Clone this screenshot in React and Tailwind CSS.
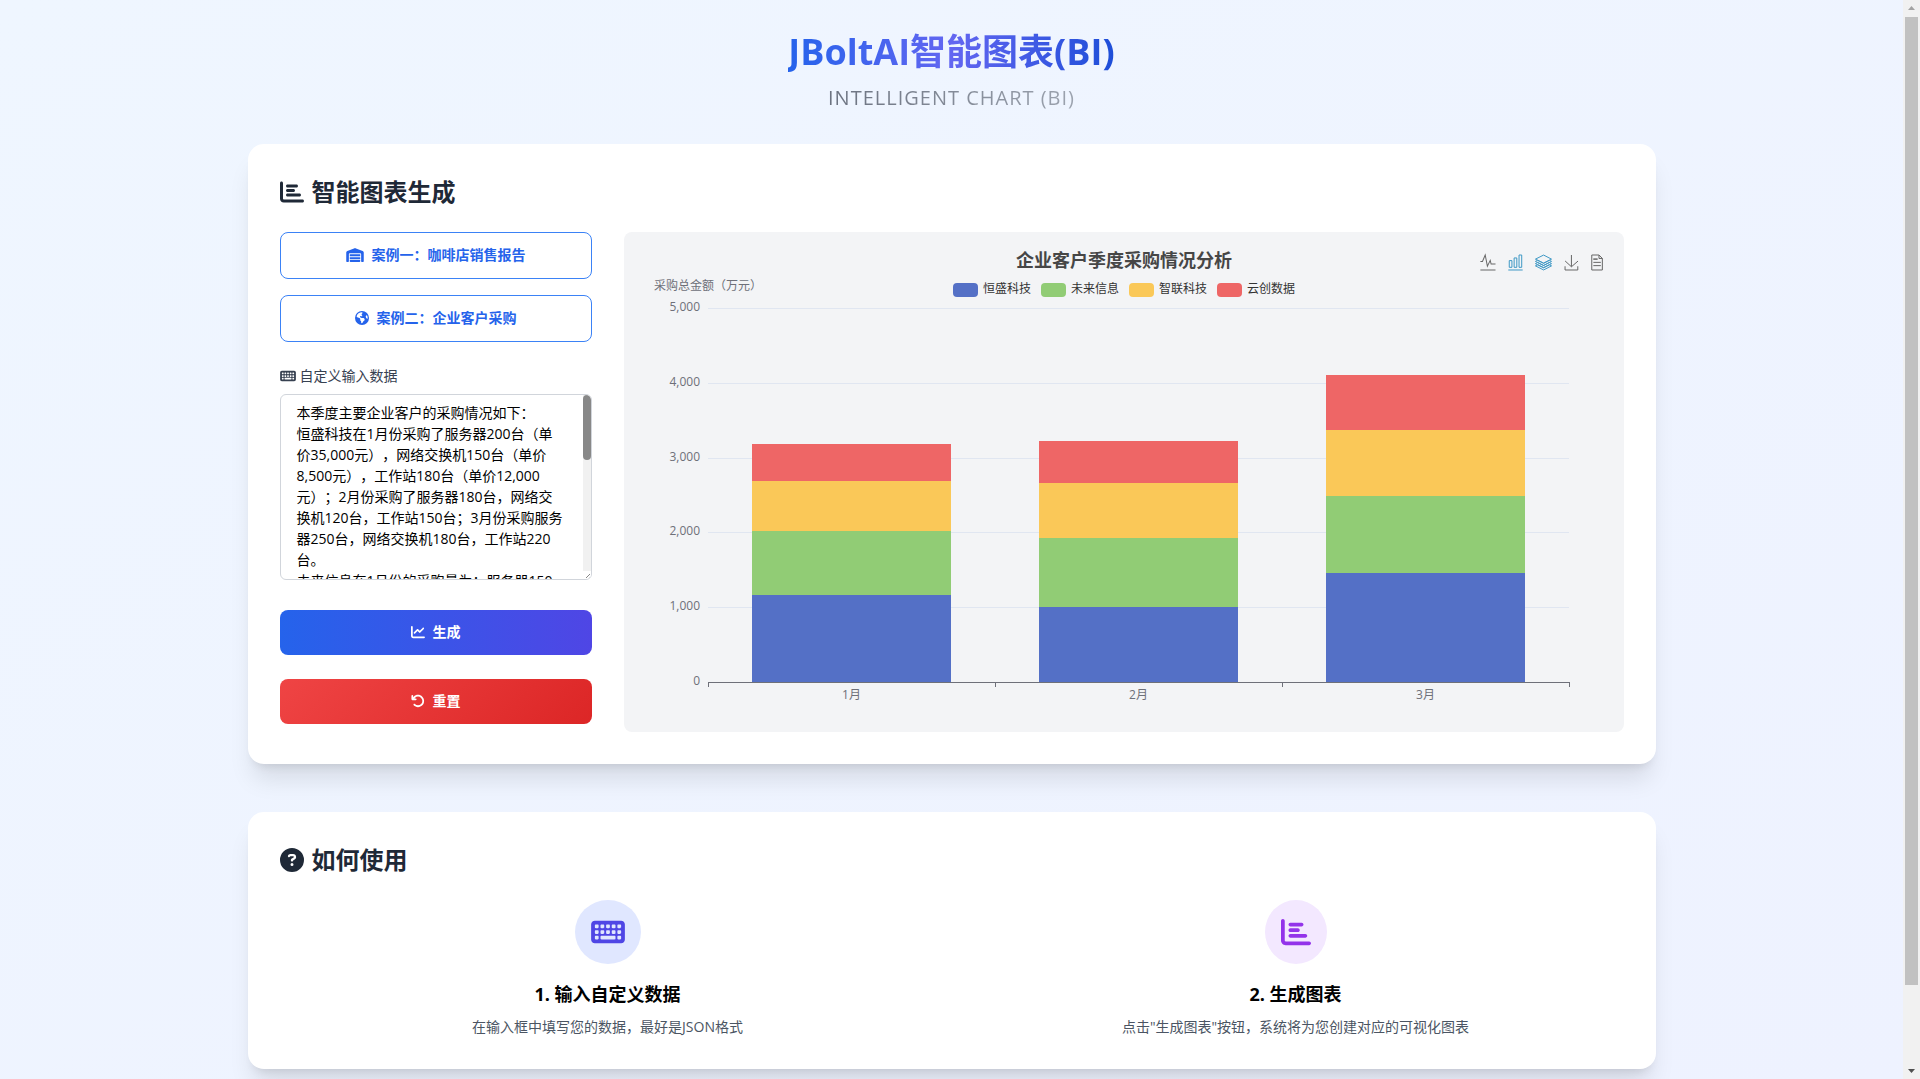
import React, { useState } from 'react';
import {
  FaArrowRotateLeft,
  FaChartBar,
  FaChartLine,
  FaCircleQuestion,
  FaEarthAmericas,
  FaKeyboard,
  FaWarehouse
} from 'react-icons/fa6';

const SAMPLE_TEXT = `本季度主要企业客户的采购情况如下：
恒盛科技在1月份采购了服务器200台（单价35,000元），网络交换机150台（单价8,500元），工作站180台（单价12,000元）；2月份采购了服务器180台，网络交换机120台，工作站150台；3月份采购服务器250台，网络交换机180台，工作站220台。
未来信息在1月份的采购量为：服务器150`;

const months = ['1月', '2月', '3月'];

const series = [
  { name: '恒盛科技', color: '#5470c6', data: [1168, 1003, 1463] },
  { name: '未来信息', color: '#91cc75', data: [850, 925, 1018] },
  { name: '智联科技', color: '#fac858', data: [668, 735, 891] },
  { name: '云创数据', color: '#ee6666', data: [500, 561, 738] }
];

const ticks = [0, 1000, 2000, 3000, 4000, 5000];

const tools = [
  {
    label: '切换为折线图',
    active: false,
    viewBox: '4 7 52 51',
    size: 'h-[15px] w-4',
    path: 'M4.1,28.9h7.1l9.3-22l7.4,38l9.7-19.7l3,12.8h14.9M4.1,58h51.4'
  },
  {
    label: '切换为柱状图',
    active: true,
    viewBox: '3 2 54 56',
    size: 'h-[15px] w-[15px]',
    path: 'M6.7,22.9h10V48h-10V22.9zM24.9,13h10v35h-10V13zM43.2,2h10v46h-10V2zM3.1,58h53.7'
  },
  {
    label: '切换为堆叠',
    active: true,
    viewBox: '0 2 60 56',
    size: 'h-[15px] w-[17px]',
    path: 'M8.2,38.4l-8.4,4.1l30.6,15.3L60,42.5l-8.1-4.1l-21.5,11L8.2,38.4z M51.9,30l-8.1,4.2l-13.4,6.9l-13.9-6.9L8.2,30l-8.4,4.2l8.4,4.2l22.2,11l21.5-11l8.1-4.2L51.9,30z M51.9,21.7l-8.1,4.2L35.7,30l-5.3,2.8L24.9,30l-8.4-4.1l-8.3-4.2l-8.4,4.2L8.2,30l8.3,4.2l13.9,6.9l13.4-6.9l8.1-4.2l8.1-4.1L51.9,21.7z M30.4,2.2L-0.2,17.5l8.4,4.1l8.3,4.2l8.4,4.2l5.5,2.7l5.3-2.7l8.1-4.2l8.1-4.2l8.1-4.1L30.4,2.2z'
  },
  {
    label: '保存为图片',
    active: false,
    viewBox: '4 0 51 58',
    size: 'h-[15px] w-[15px]',
    path: 'M4.7,22.9L29.3,45.5L54.7,23.4M4.6,43.6L4.6,58L53.8,58L53.8,43.6M29.2,45.1L29.2,0'
  },
  {
    label: '数据视图',
    active: false,
    viewBox: '11 2 40 56',
    size: 'h-[15px] w-3',
    path: 'M17.5,17.3H33 M17.5,17.3H33 M45.4,29.5h-28 M11.5,2v56H51V14.8L38.4,2H11.5z M38.4,2.2v12.7H51 M45.4,41.7h-28'
  }
];

// plot area inside the 1000x500 chart
const LEFT = 84;
const RIGHT = 945;
const TOP = 76;
const BOTTOM = 450;
const BAND = (RIGHT - LEFT) / months.length;
const BAR = 199;

const yOf = (value) => BOTTOM - (value / 5000) * (BOTTOM - TOP);

const StackedBarChart = () => {
  const bars = months.flatMap((month, i) => {
    let sum = 0;
    return series.map((s) => {
      const y0 = Math.round(yOf(sum));
      sum += s.data[i];
      const y1 = Math.round(yOf(sum));
      return {
        key: month + s.name,
        x: LEFT + i * BAND + 44,
        y: y1,
        height: y0 - y1,
        color: s.color
      };
    });
  });

  return (
    <svg viewBox="0 0 1000 500" className="block w-full" role="img" aria-label="企业客户季度采购情况分析">
      <text x="500" y="35" textAnchor="middle" className="fill-[#464646] text-lg font-bold">
        企业客户季度采购情况分析
      </text>

      {series.map((s, i) => (
        <g key={s.name}>
          <rect x={329 + i * 88} y="51" width="25" height="14" rx="4" fill={s.color} />
          <text x={359 + i * 88} y="61" className="fill-[#333333] text-xs">
            {s.name}
          </text>
        </g>
      ))}

      <text x="84" y="58" textAnchor="middle" className="fill-[#6e7079] text-xs">
        采购总金额（万元）
      </text>

      {ticks.map((tick) => (
        <g key={tick}>
          {tick > 0 && (
            <path d={`M${LEFT} ${Math.round(yOf(tick)) + 0.5}H${RIGHT}`} stroke="#e0e6f1" />
          )}
          <text x="76" y={Math.round(yOf(tick)) + 3} textAnchor="end" className="fill-[#6e7079] text-xs">
            {tick.toLocaleString('en-US')}
          </text>
        </g>
      ))}

      {bars.map((b) => (
        <rect key={b.key} x={b.x} y={b.y} width={BAR} height={b.height} fill={b.color} />
      ))}

      <path d={`M${LEFT} ${BOTTOM + 0.5}H${RIGHT + 1}`} stroke="#6e7079" />
      {[0, 1, 2, 3].map((i) => (
        <path key={i} d={`M${LEFT + i * BAND + 0.5} ${BOTTOM}v5`} stroke="#6e7079" />
      ))}
      {months.map((month, i) => (
        <text
          key={month}
          x={LEFT + (i + 0.5) * BAND}
          y="467"
          textAnchor="middle"
          className="fill-[#6e7079] text-xs"
        >
          {month}
        </text>
      ))}
    </svg>
  );
};

const ChartPanel = () => (
  <div className="relative rounded-lg bg-[#f3f4f6] lg:col-span-3">
    <StackedBarChart />
    <div className="absolute top-[23px] right-[21px] flex gap-3">
      {tools.map((tool) => (
        <button
          key={tool.label}
          type="button"
          aria-label={tool.label}
          className={tool.active ? 'text-[#3e98c5]' : 'text-[#666666]'}
        >
          <svg
            viewBox={tool.viewBox}
            className={`block overflow-visible ${tool.size}`}
            fill="none"
            stroke="currentColor"
          >
            <path d={tool.path} vectorEffect="non-scaling-stroke" />
          </svg>
        </button>
      ))}
    </div>
  </div>
);

const Card = ({ icon, title, children }) => (
  <section className="rounded-2xl bg-white p-8 shadow-[0_20px_25px_-5px_rgba(0,0,0,0.1),0_8px_10px_-6px_rgba(0,0,0,0.1)]">
    <h2 className="mb-6 flex items-center gap-2 text-2xl font-bold text-[#1f2937]">
      {icon}
      {title}
    </h2>
    {children}
  </section>
);

const CaseButton = ({ icon, children }) => (
  <button
    type="button"
    className="flex w-full items-center justify-center gap-2 rounded-lg border border-[#3b82f6] bg-white pt-[11px] pb-[13px] text-sm/[21px] font-bold text-[#2563eb]"
  >
    {icon}
    {children}
  </button>
);

const DataForm = () => {
  const [text, setText] = useState(SAMPLE_TEXT);

  return (
    <div className="flex flex-col">
      <div className="flex flex-col gap-4">
        <CaseButton icon={<FaWarehouse className="h-[14px] w-[18px]" />}>案例一：咖啡店销售报告</CaseButton>
        <CaseButton icon={<FaEarthAmericas className="size-[14px]" />}>案例二：企业客户采购</CaseButton>
      </div>

      <label htmlFor="custom-data" className="mt-6 mb-2 flex items-center gap-1 text-sm/5 text-[#374151]">
        <FaKeyboard className="h-[14px] w-4" />
        自定义输入数据
      </label>
      <div className="flex h-[186px] overflow-hidden rounded-md border border-[#d1d5db]">
        <textarea
          id="custom-data"
          value={text}
          onChange={(e) => setText(e.target.value)}
          className="min-w-0 flex-1 resize-none overflow-hidden pt-[7px] pr-[18px] pl-4 text-sm/[21px] text-black outline-none [text-spacing-trim:space-all]"
        />
        <div className="flex w-2 flex-col justify-between bg-[#f1f1f1]">
          <div className="h-[65px] rounded-full bg-[#888888]" />
          <svg viewBox="0 0 8 8" className="size-2 bg-white" stroke="#888888">
            <path d="M3 7L7 3M6 7.5L7.5 6" />
          </svg>
        </div>
      </div>

      <button
        type="button"
        className="mt-[30px] flex items-center justify-center gap-2 rounded-lg bg-linear-to-r/srgb from-[#2563eb] to-[#4f46e5] pt-[11px] pb-[13px] text-sm/[21px] font-bold text-white"
      >
        <FaChartLine className="size-[14px]" />
        生成
      </button>
      <button
        type="button"
        onClick={() => setText('')}
        className="mt-6 flex items-center justify-center gap-2 rounded-lg bg-[linear-gradient(135deg,#ef4444,#dc2626)] pt-[11px] pb-[13px] text-sm/[21px] font-bold text-white"
      >
        <FaArrowRotateLeft className="size-[14px]" />
        重置
      </button>
    </div>
  );
};

const Step = ({ icon, title, children }) => (
  <div className="flex flex-col items-center text-center">
    {icon}
    <h3 className="mt-4 mb-2 text-lg/7 font-bold text-black">{title}</h3>
    <p className="text-sm/[21px] text-[#4b5563]">{children}</p>
  </div>
);

const PageScrollbar = () => (
  <div className="flex w-[17px] shrink-0 flex-col items-center justify-between bg-[#f1f1f1] py-[6px]" aria-hidden="true">
    <svg viewBox="0 0 7 4" className="h-1 w-[7px]" fill="#a3a3a3">
      <path d="M0 4L3.5 0L7 4z" />
    </svg>
    <div className="mt-[7px] flex min-h-0 w-[13px] flex-1 flex-col">
      <div className="h-[92%] bg-[#c1c1c1]" />
    </div>
    <svg viewBox="0 0 7 4" className="h-1 w-[7px]" fill="#505050">
      <path d="M0 0L3.5 4L7 0z" />
    </svg>
  </div>
);

const App = () => {
  return (
    <div className="flex h-screen overflow-hidden bg-linear-to-br/srgb from-[#eff6ff] to-[#eef2ff] font-['Open_Sans','Noto_Sans_CJK_SC',sans-serif] [text-spacing-trim:space-all]">
      <main className="min-w-0 flex-1 overflow-hidden">
        <div className="mx-auto flex max-w-[1536px] flex-col px-16 py-8">
          <header className="mb-8 flex flex-col items-center">
            <h1 className="bg-linear-to-r/srgb from-[#2563eb] via-[#6366f1] to-[#1d4ed8] bg-clip-text text-4xl/10 font-bold text-transparent">
              JBoltAI智能图表(BI)
            </h1>
            <p className="mt-3 bg-linear-to-r/srgb from-[#6b7280] to-[#9ca3af] bg-clip-text text-xl/7 tracking-wider text-transparent uppercase">
              Intelligent Chart (BI)
            </p>
          </header>

          <div className="flex flex-col gap-12">
            <Card icon={<FaChartBar />} title="智能图表生成">
              <div className="grid gap-8 lg:grid-cols-4">
                <DataForm />
                <ChartPanel />
              </div>
            </Card>

            <Card icon={<FaCircleQuestion />} title="如何使用">
              <div className="grid gap-8 md:grid-cols-2">
                <Step
                  title="1. 输入自定义数据"
                  icon={
                    <div className="flex h-16 items-center rounded-[50%] bg-[#e0e7ff] px-4 text-[#4f46e5]">
                      <FaKeyboard className="h-[30px] w-[34px]" />
                    </div>
                  }
                >
                  在输入框中填写您的数据，最好是JSON格式
                </Step>
                <Step
                  title="2. 生成图表"
                  icon={
                    <div className="flex h-16 items-center rounded-[50%] bg-[#f3e8ff] px-4 text-[#9333ea]">
                      <FaChartBar className="size-[30px]" />
                    </div>
                  }
                >
                  点击"生成图表"按钮，系统将为您创建对应的可视化图表
                </Step>
              </div>
            </Card>
          </div>
        </div>
      </main>
      <PageScrollbar />
    </div>
  );
};

export default App;
